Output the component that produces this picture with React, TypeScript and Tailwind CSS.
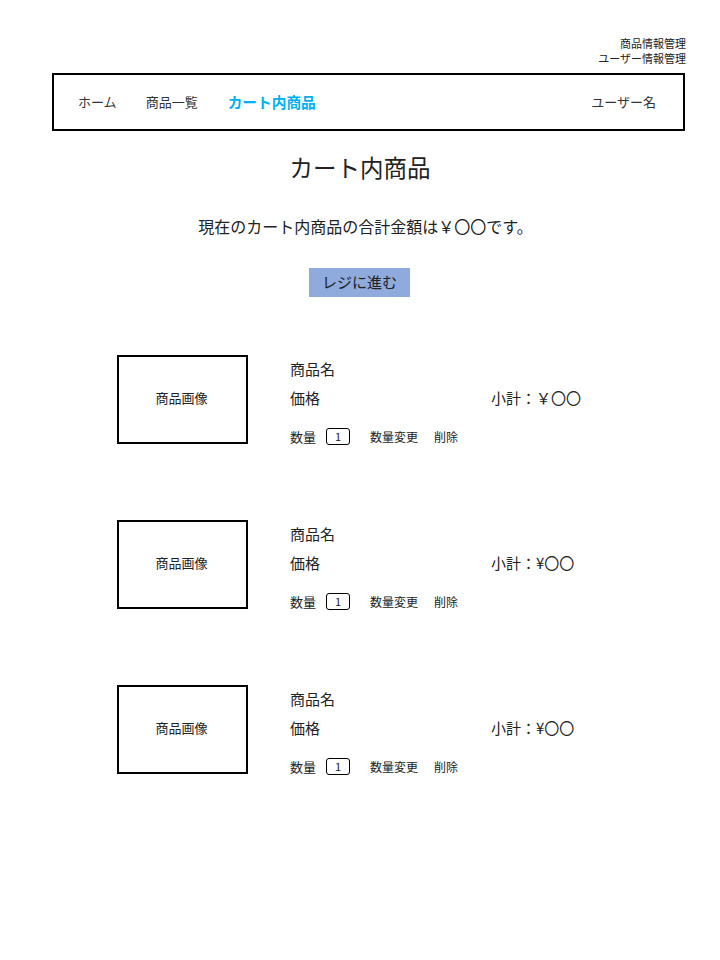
import React from 'react';

type CartItem = {
  id: number;
  subtotal: string;
};

const items: CartItem[] = [
  { id: 1, subtotal: '小計：￥〇〇' },
  { id: 2, subtotal: '小計：¥〇〇' },
  { id: 3, subtotal: '小計：¥〇〇' },
];

const font = { fontFamily: '"Noto Sans CJK JP", "Noto Sans", sans-serif' };

const CartRow: React.FC<{ item: CartItem }> = ({ item }) => {
  return (
    <div className="flex h-[89px]">
      <div className="w-[131px] h-[89px] border-2 border-black flex items-center justify-center pb-[3px] pr-[2px] text-[13px] text-[#222]">
        商品画像
      </div>
      <div className="ml-[42px] flex flex-col">
        <div className="mt-[4px] h-[20px] leading-[20px] text-[15px] text-[#222]">商品名</div>
        <div className="mt-[9px] h-[20px] leading-[20px] text-[15px] text-[#222] flex">
          <span className="w-[201px]">価格</span>
          <span>{item.subtotal}</span>
        </div>
        <div className="mt-[20px] h-[17px] flex items-center text-[12px] text-[#222]">
          <span className="text-[13px]">数量</span>
          <span className="ml-[10px] w-[24px] h-[17px] border border-black rounded-[3px] flex items-center justify-center text-[11px] leading-none">
            1
          </span>
          <button className="ml-[20px] text-[12px]">数量変更</button>
          <button className="ml-[16px] text-[12px]">削除</button>
        </div>
      </div>
    </div>
  );
};

const App: React.FC = () => {
  return (
    <div className="min-h-screen bg-white text-black" style={font}>
      <div className="pt-[36px] pr-[34px] flex flex-col items-end text-[11px] leading-[15px] text-[#222]">
        <a>商品情報管理</a>
        <a>ユーザー情報管理</a>
      </div>

      <nav className="mt-[7px] ml-[52px] w-[633px] h-[58px] border-2 border-black flex items-center px-[24px] text-[13px] text-[#333]">
        <a>ホーム</a>
        <a className="ml-[29px]">商品一覧</a>
        <a className="ml-[30px] text-[14.7px] font-bold text-[#00b0f0]">カート内商品</a>
        <a className="ml-auto mr-[3px]">ユーザー名</a>
      </nav>

      <h1 className="mt-[20px] text-center text-[23.5px] leading-[32px] text-[#222]">カート内商品</h1>

      <p className="mt-[31px] pl-[11px] text-center text-[16px] leading-[24px] text-[#222]">
        現在のカート内商品の合計金額は￥〇〇です。
      </p>

      <div className="mt-[30px] flex justify-center">
        <button className="ml-[-1px] w-[101px] h-[29px] bg-[#8faadc] text-[15px] text-[#222]">
          レジに進む
        </button>
      </div>

      <div className="mt-[58px] ml-[117px] flex flex-col gap-[76px]">
        {items.map((item) => (
          <CartRow key={item.id} item={item} />
        ))}
      </div>
    </div>
  );
};

export default App;
